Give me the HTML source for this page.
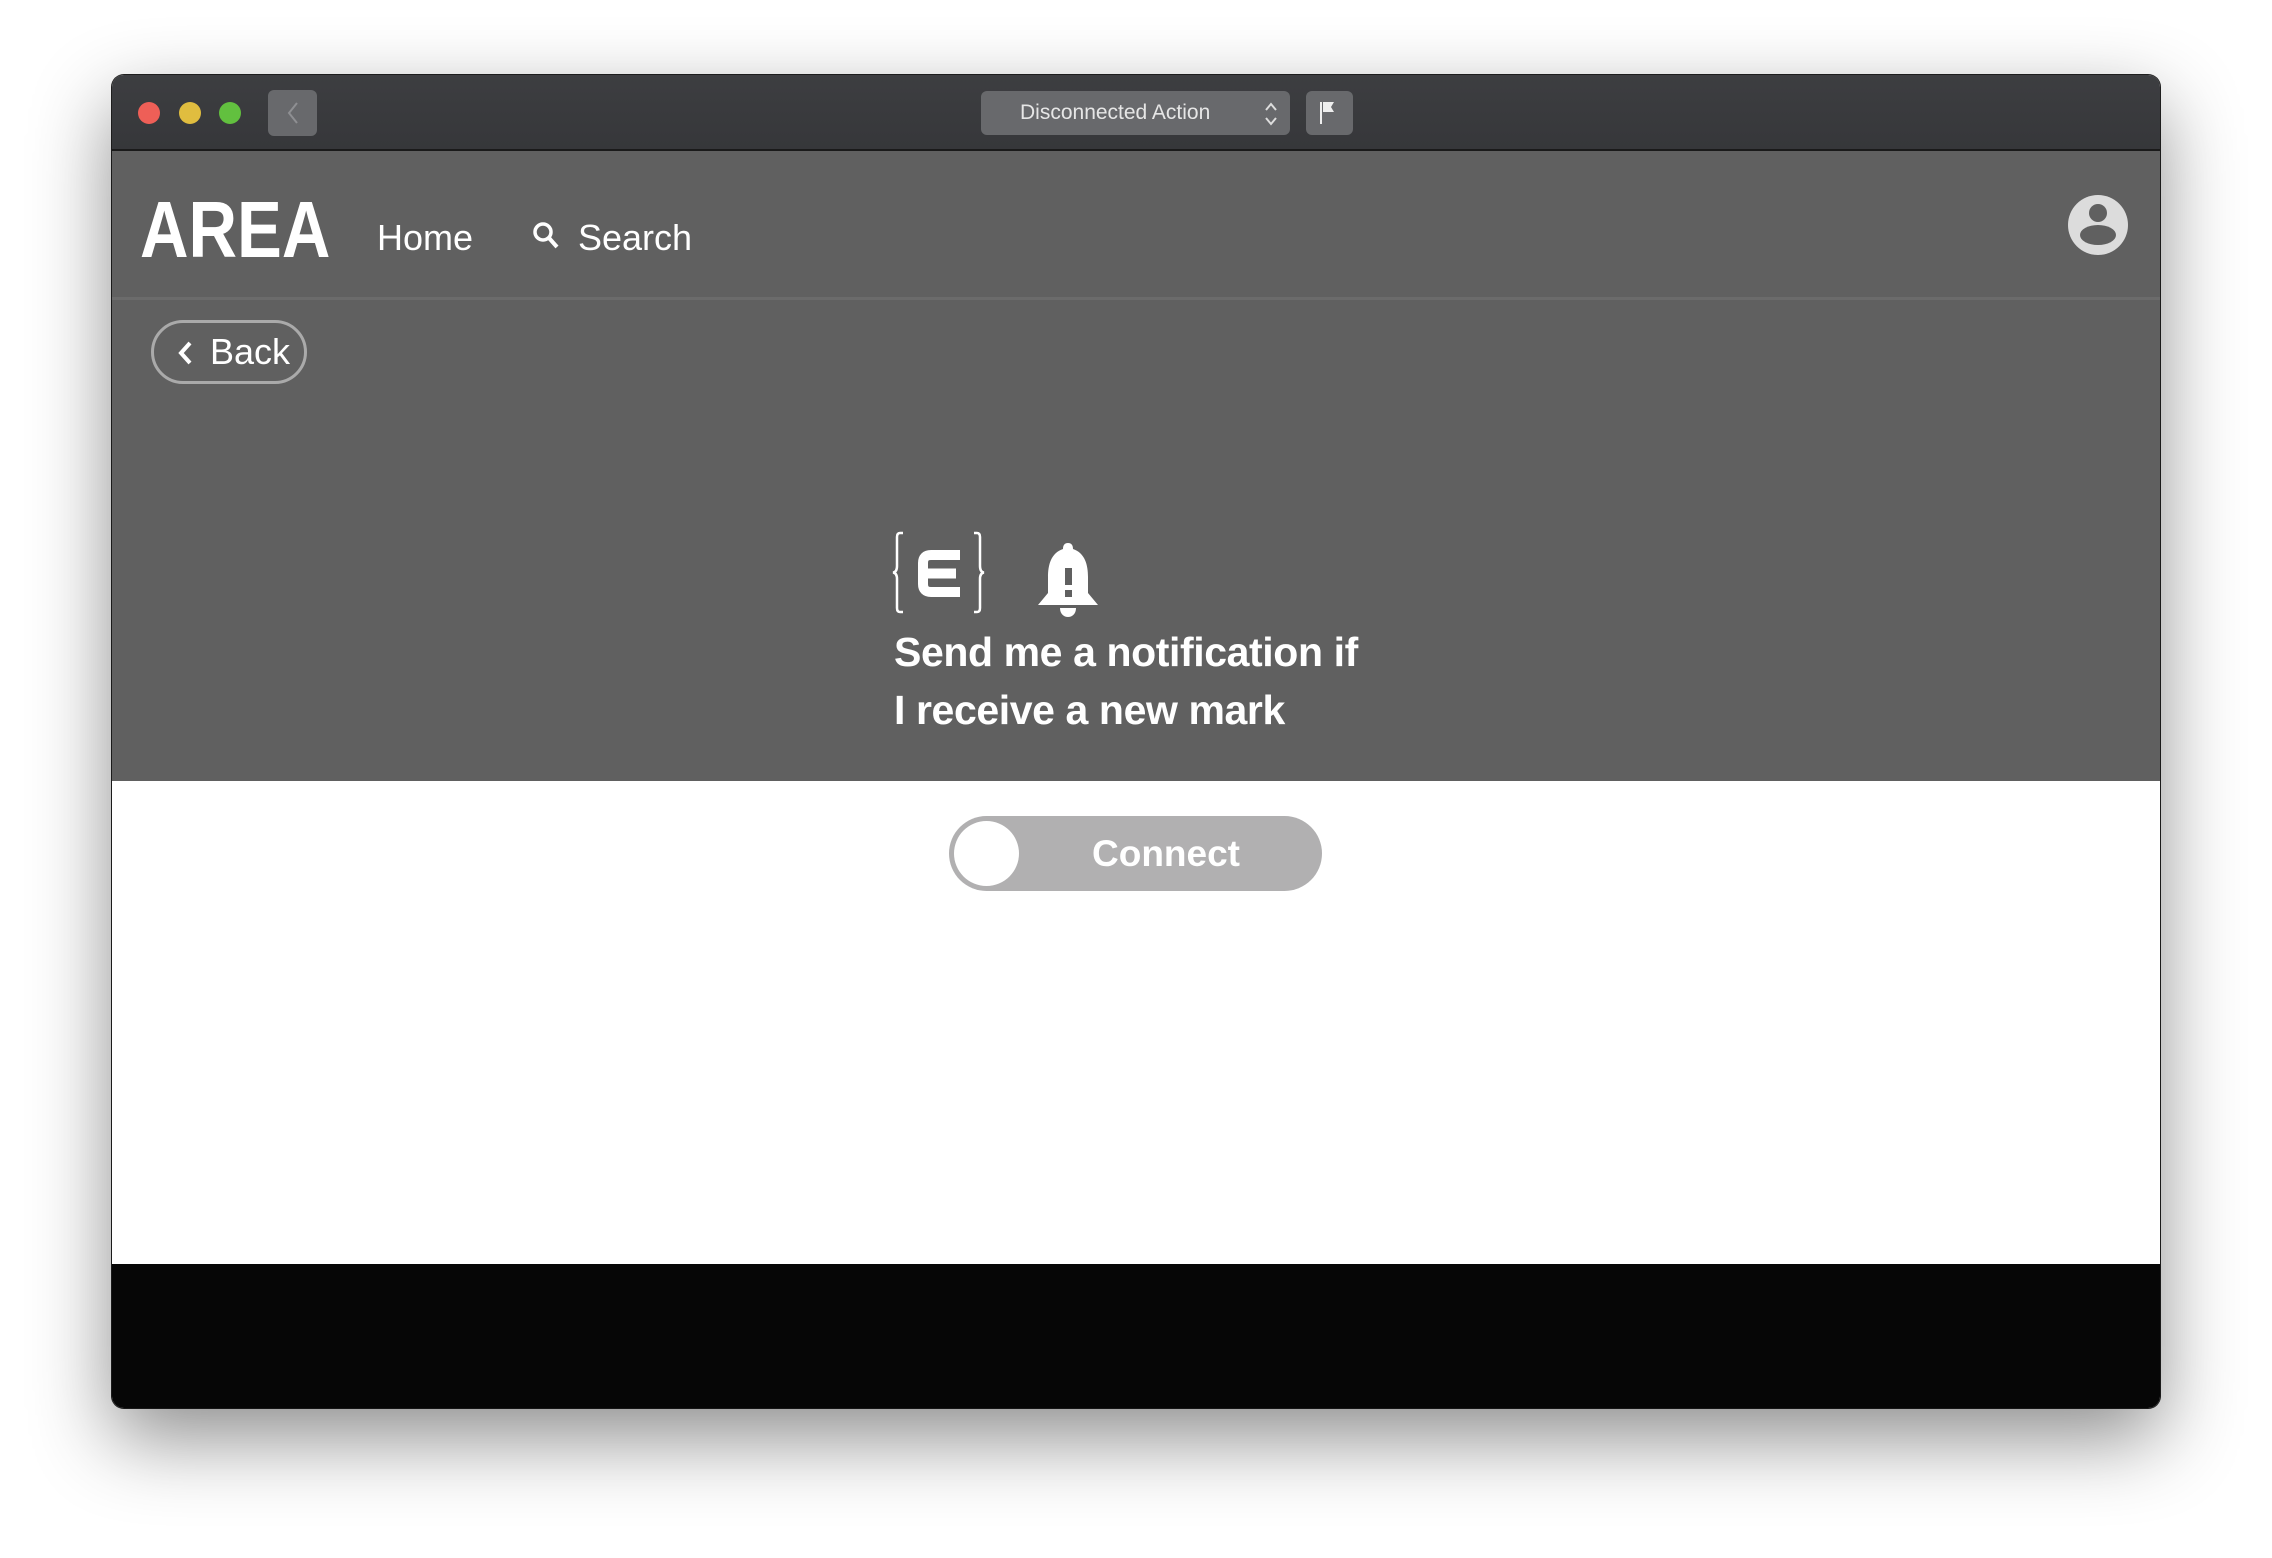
<!DOCTYPE html>
<html><head><meta charset="utf-8">
<style>
*{margin:0;padding:0;box-sizing:border-box}
html,body{width:2272px;height:1558px;background:#fff;overflow:hidden;font-family:"Liberation Sans",sans-serif}
.win{position:absolute;left:112px;top:75px;width:2048px;height:1333px;border-radius:12px;overflow:hidden;box-shadow:0 30px 80px rgba(0,0,0,0.45),0 0 0 1px #222;background:#fff}
.title{position:absolute;left:0;top:0;width:100%;height:76px;background:linear-gradient(#3d3e41,#36373a);border-bottom:2px solid #1a1a1a}
.dot{position:absolute;top:27px;width:22px;height:22px;border-radius:50%}
.tb{position:absolute;background:#68696c;border-radius:6px}
.hdr{position:absolute;left:0;top:76px;width:100%;height:630px;background:#606060}
.line{position:absolute;left:0;top:146px;width:100%;height:3px;background:#6b6b6b}
.w{color:#fff;position:absolute;white-space:nowrap}
</style></head><body>
<div class="win">
 <div class="title">
  <div class="dot" style="left:26px;background:#ee5f57"></div>
  <div class="dot" style="left:67px;background:#e0bd3f"></div>
  <div class="dot" style="left:107px;background:#62c03f"></div>
  <div class="tb" style="left:156px;top:15px;width:49px;height:46px"><svg width="49" height="46"><path d="M29 13 L21 23 L29 33" stroke="#8e8f92" stroke-width="2" fill="none"/></svg></div>
  <div class="tb" style="left:869px;top:16px;width:309px;height:44px"><span style="position:absolute;left:39px;top:10px;color:#e6e6e6;font-size:21px">Disconnected Action</span>
   <svg style="position:absolute;left:282px;top:10px" width="16" height="26"><path d="M3 9 L8 3 L13 9 M3 17 L8 23 L13 17" stroke="#ddd" stroke-width="2" fill="none"/></svg></div>
  <div class="tb" style="left:1194px;top:16px;width:47px;height:44px"><svg width="47" height="44"><path d="M15 11 V33" stroke="#eee" stroke-width="2"/><path d="M17 11 H28 L25 16 L28 21 H17Z" fill="#eee"/></svg></div>
 </div>
 <div class="hdr">
  <div class="w" style="left:28px;top:33px;font-size:80px;font-weight:bold;transform:scaleX(0.84);transform-origin:0 0">AREA</div>
  <div class="w" style="left:265px;top:66px;font-size:36px">Home</div>
  <svg style="position:absolute;left:420px;top:70px" width="30" height="32"><circle cx="11" cy="11" r="8" stroke="#fff" stroke-width="3.5" fill="none"/><path d="M17 17 L25 26" stroke="#fff" stroke-width="4"/></svg>
  <div class="w" style="left:466px;top:66px;font-size:36px">Search</div>
  <svg style="position:absolute;left:1956px;top:44px" width="60" height="60"><circle cx="30" cy="30" r="30" fill="#dcdcdc"/><circle cx="30" cy="18" r="9" fill="#606060"/><ellipse cx="30" cy="40" rx="18" ry="10" fill="#606060"/></svg>
  <div class="line"></div>
  <div style="position:absolute;left:39px;top:169px;width:156px;height:64px;border:3px solid #aaa;border-radius:32px"></div>
  <svg style="position:absolute;left:63px;top:187px" width="20" height="30"><path d="M15 5 L6 15 L15 25" stroke="#fff" stroke-width="4" fill="none"/></svg>
  <div class="w" style="left:98px;top:180px;font-size:36px">Back</div>
  <svg style="position:absolute;left:778px;top:379px" width="100" height="90">
   <path d="M13 3 H10 Q7 3 7 7 V36 Q7 42 3 42.5 Q7 43 7 49 V78 Q7 82 10 82 H13" stroke="#fff" stroke-width="2.5" fill="none"/>
   <path d="M84 3 H87 Q90 3 90 7 V36 Q90 42 94 42.5 Q90 43 90 49 V78 Q90 82 87 82 H84" stroke="#fff" stroke-width="2.5" fill="none"/>
   <path d="M70 25 H41 Q33 25 33 33 V54 Q33 62 41 62 H70 M33 43.5 H66" stroke="#fff" stroke-width="10" fill="none"/>
  </svg>
  <svg style="position:absolute;left:926px;top:392px" width="60" height="74"><path d="M30 0 C34 0 35 3 35 6 C47 10 50 22 50 34 V50 L60 62 H0 L10 50 V34 C10 22 13 10 25 6 C25 3 26 0 30 0Z" fill="#fff"/><path d="M22 65 H38 C38 71 34 74 30 74 C26 74 22 71 22 65Z" fill="#fff"/><rect x="27" y="25" width="7" height="17" fill="#606060"/><rect x="27" y="47" width="7" height="7" fill="#606060"/></svg>
  <div class="w" style="left:782px;top:472px;font-size:41px;font-weight:bold;line-height:58px;letter-spacing:-0.4px">Send me a notification if<br>I receive a new mark</div>
 </div>
 <div style="position:absolute;left:837px;top:741px;width:373px;height:75px;background:#b1b0b1;border-radius:38px"></div>
 <div style="position:absolute;left:842px;top:746px;width:65px;height:65px;background:#fff;border-radius:50%"></div>
 <div class="w" style="left:980px;top:758px;font-size:37px;font-weight:bold">Connect</div>
 <div style="position:absolute;left:0;top:1189px;width:100%;height:144px;background:#060606"></div>
</div>
</body></html>
